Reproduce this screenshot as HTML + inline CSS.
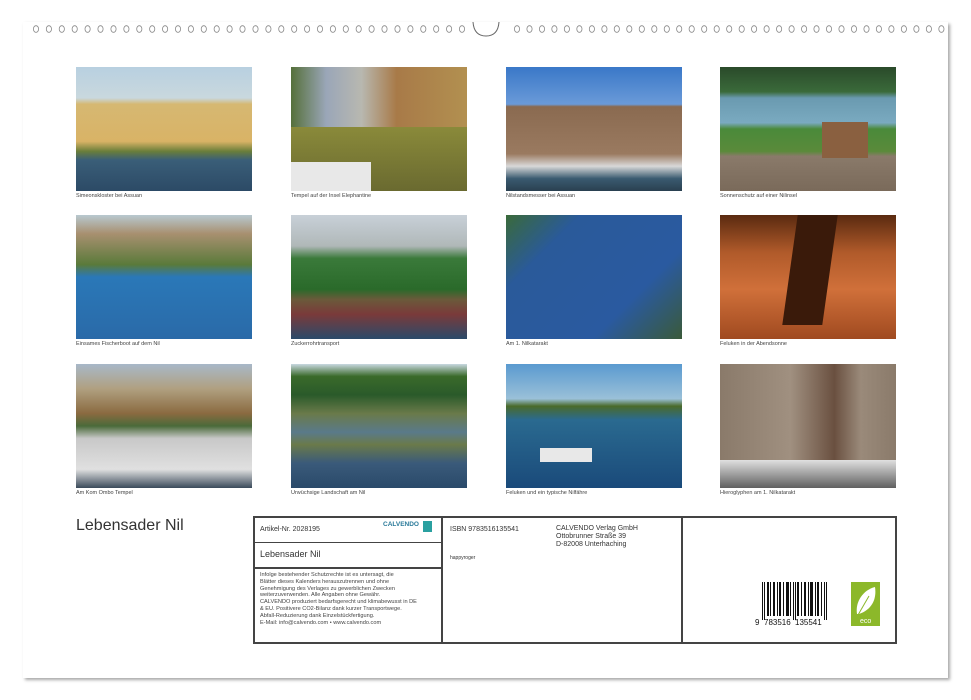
<!DOCTYPE html>
<html><head><meta charset="utf-8"><style>
*{margin:0;padding:0;box-sizing:border-box}
body{width:971px;height:700px;background:#fff;position:relative;overflow:hidden;font-family:"Liberation Sans",sans-serif;color:#333}
.page{position:absolute;left:23px;top:22px;width:925px;height:656px;background:#fff;box-shadow:2px 2px 3px rgba(0,0,0,.35)}
.ph{position:absolute;width:176px;height:124px;overflow:hidden}
.cap{position:absolute;font-size:5.5px;color:#444;white-space:nowrap}
.box{position:absolute;border:2px solid #444}
.t{position:absolute;white-space:nowrap}
</style></head><body>
<div class="page"></div>
<svg style="position:absolute;left:0;top:20px" width="971" height="20" id="holes">
<g fill="none" stroke="#888" stroke-width="0.8">
<ellipse cx="36" cy="9" rx="2.6" ry="3.3"/><ellipse cx="48.9" cy="9" rx="2.6" ry="3.3"/><ellipse cx="61.8" cy="9" rx="2.6" ry="3.3"/><ellipse cx="74.7" cy="9" rx="2.6" ry="3.3"/><ellipse cx="87.6" cy="9" rx="2.6" ry="3.3"/><ellipse cx="100.5" cy="9" rx="2.6" ry="3.3"/><ellipse cx="113.5" cy="9" rx="2.6" ry="3.3"/><ellipse cx="126.4" cy="9" rx="2.6" ry="3.3"/><ellipse cx="139.3" cy="9" rx="2.6" ry="3.3"/><ellipse cx="152.2" cy="9" rx="2.6" ry="3.3"/><ellipse cx="165.1" cy="9" rx="2.6" ry="3.3"/><ellipse cx="178" cy="9" rx="2.6" ry="3.3"/><ellipse cx="190.9" cy="9" rx="2.6" ry="3.3"/><ellipse cx="203.8" cy="9" rx="2.6" ry="3.3"/><ellipse cx="216.7" cy="9" rx="2.6" ry="3.3"/><ellipse cx="229.6" cy="9" rx="2.6" ry="3.3"/><ellipse cx="242.5" cy="9" rx="2.6" ry="3.3"/><ellipse cx="255.5" cy="9" rx="2.6" ry="3.3"/><ellipse cx="268.4" cy="9" rx="2.6" ry="3.3"/><ellipse cx="281.3" cy="9" rx="2.6" ry="3.3"/><ellipse cx="294.2" cy="9" rx="2.6" ry="3.3"/><ellipse cx="307.1" cy="9" rx="2.6" ry="3.3"/><ellipse cx="320" cy="9" rx="2.6" ry="3.3"/><ellipse cx="332.9" cy="9" rx="2.6" ry="3.3"/><ellipse cx="345.8" cy="9" rx="2.6" ry="3.3"/><ellipse cx="358.7" cy="9" rx="2.6" ry="3.3"/><ellipse cx="371.6" cy="9" rx="2.6" ry="3.3"/><ellipse cx="384.5" cy="9" rx="2.6" ry="3.3"/><ellipse cx="397.5" cy="9" rx="2.6" ry="3.3"/><ellipse cx="410.4" cy="9" rx="2.6" ry="3.3"/><ellipse cx="423.3" cy="9" rx="2.6" ry="3.3"/><ellipse cx="436.2" cy="9" rx="2.6" ry="3.3"/><ellipse cx="449.1" cy="9" rx="2.6" ry="3.3"/><ellipse cx="462" cy="9" rx="2.6" ry="3.3"/>
<ellipse cx="517" cy="9" rx="2.6" ry="3.3"/><ellipse cx="529.5" cy="9" rx="2.6" ry="3.3"/><ellipse cx="542" cy="9" rx="2.6" ry="3.3"/><ellipse cx="554.4" cy="9" rx="2.6" ry="3.3"/><ellipse cx="566.9" cy="9" rx="2.6" ry="3.3"/><ellipse cx="579.4" cy="9" rx="2.6" ry="3.3"/><ellipse cx="591.9" cy="9" rx="2.6" ry="3.3"/><ellipse cx="604.4" cy="9" rx="2.6" ry="3.3"/><ellipse cx="616.8" cy="9" rx="2.6" ry="3.3"/><ellipse cx="629.3" cy="9" rx="2.6" ry="3.3"/><ellipse cx="641.8" cy="9" rx="2.6" ry="3.3"/><ellipse cx="654.3" cy="9" rx="2.6" ry="3.3"/><ellipse cx="666.8" cy="9" rx="2.6" ry="3.3"/><ellipse cx="679.2" cy="9" rx="2.6" ry="3.3"/><ellipse cx="691.7" cy="9" rx="2.6" ry="3.3"/><ellipse cx="704.2" cy="9" rx="2.6" ry="3.3"/><ellipse cx="716.7" cy="9" rx="2.6" ry="3.3"/><ellipse cx="729.2" cy="9" rx="2.6" ry="3.3"/><ellipse cx="741.7" cy="9" rx="2.6" ry="3.3"/><ellipse cx="754.1" cy="9" rx="2.6" ry="3.3"/><ellipse cx="766.6" cy="9" rx="2.6" ry="3.3"/><ellipse cx="779.1" cy="9" rx="2.6" ry="3.3"/><ellipse cx="791.6" cy="9" rx="2.6" ry="3.3"/><ellipse cx="804.1" cy="9" rx="2.6" ry="3.3"/><ellipse cx="816.5" cy="9" rx="2.6" ry="3.3"/><ellipse cx="829" cy="9" rx="2.6" ry="3.3"/><ellipse cx="841.5" cy="9" rx="2.6" ry="3.3"/><ellipse cx="854" cy="9" rx="2.6" ry="3.3"/><ellipse cx="866.5" cy="9" rx="2.6" ry="3.3"/><ellipse cx="878.9" cy="9" rx="2.6" ry="3.3"/><ellipse cx="891.4" cy="9" rx="2.6" ry="3.3"/><ellipse cx="903.9" cy="9" rx="2.6" ry="3.3"/><ellipse cx="916.4" cy="9" rx="2.6" ry="3.3"/><ellipse cx="928.9" cy="9" rx="2.6" ry="3.3"/><ellipse cx="941.4" cy="9" rx="2.6" ry="3.3"/>
<path d="M473 2 Q474 16 486 16 Q498 16 499 2" stroke="#666" stroke-width="1"/>
</g>
</svg>

<!-- row 1 -->
<div class="ph" style="left:76px;top:67px;background:linear-gradient(#b8d0e0 0%,#c9d8de 25%,#d6b872 30%,#d9b366 60%,#6a7e3a 68%,#3a5e78 75%,#2c4a66 100%)"></div>
<div class="ph" style="left:291px;top:67px;background:linear-gradient(90deg,#55703a 0%,#9aa6b8 20%,#b8b8b0 40%,#a87a48 60%,#b29050 100%)"><div style="position:absolute;left:0;top:60px;width:176px;height:64px;background:linear-gradient(#8a8a3a,#6a6a30)"></div><div style="position:absolute;left:0;top:95px;width:80px;height:29px;background:#e8e8e8"></div></div>
<div class="ph" style="left:506px;top:67px;background:linear-gradient(#3a78c8 0%,#6a9ad8 30%,#8a6a50 32%,#9a7a60 70%,#d8d8d8 80%,#3a5a70 90%,#2a4050 100%)"></div>
<div class="ph" style="left:720px;top:67px;background:linear-gradient(#2a4a2a 0%,#3a6a3a 20%,#6a9ab0 25%,#7aaac0 45%,#4a8a3a 50%,#5a8a3a 68%,#8a7a6a 72%,#7a6a5a 100%)"><div style="position:absolute;left:102px;top:55px;width:46px;height:36px;background:#8a6040"></div></div>
<div class="cap" style="left:76px;top:193px">Simeonskloster bei Assuan</div>
<div class="cap" style="left:291px;top:193px">Tempel auf der Insel Elephantine</div>
<div class="cap" style="left:506px;top:193px">Nilstandsmesser bei Assuan</div>
<div class="cap" style="left:720px;top:193px">Sonnenschutz auf einer Nilinsel</div>

<!-- row 2 -->
<div class="ph" style="left:76px;top:215px;background:linear-gradient(#b8c8d0 0%,#a89070 15%,#5a7a3a 40%,#2a78b8 50%,#2a6aa8 100%)"></div>
<div class="ph" style="left:291px;top:215px;background:linear-gradient(#c8d0d8 0%,#b0b8b8 25%,#3a7a3a 35%,#2a6a2a 60%,#6a5a3a 68%,#7a3a3a 80%,#2a4a6a 100%)"></div>
<div class="ph" style="left:506px;top:215px;background:linear-gradient(135deg,#3a6a3a 0%,#2a5a9a 25%,#2a5aa0 70%,#3a5a3a 100%)"></div>
<div class="ph" style="left:720px;top:215px;background:linear-gradient(#5a2a10 0%,#b05a2a 30%,#d0703a 60%,#a04a20 100%)"><div style="position:absolute;left:70px;top:0;width:40px;height:110px;background:#3a1a0a;transform:skewX(-8deg)"></div></div>
<div class="cap" style="left:76px;top:341px">Einsames Fischerboot auf dem Nil</div>
<div class="cap" style="left:291px;top:341px">Zuckerrohrtransport</div>
<div class="cap" style="left:506px;top:341px">Am 1. Nilkatarakt</div>
<div class="cap" style="left:720px;top:341px">Feluken in der Abendsonne</div>

<!-- row 3 -->
<div class="ph" style="left:76px;top:364px;background:linear-gradient(#a8b8c8 0%,#b0a080 20%,#8a6a40 40%,#4a6a3a 50%,#c8c8c8 60%,#e0e0e0 85%,#3a4a5a 100%)"></div>
<div class="ph" style="left:291px;top:364px;background:linear-gradient(#c8d8e0 0%,#3a6a2a 10%,#2a5a2a 25%,#6a7a4a 40%,#5a7a8a 55%,#6a7a4a 65%,#3a5a7a 80%,#2a4a6a 100%)"></div>
<div class="ph" style="left:506px;top:364px;background:linear-gradient(#5a9ad0 0%,#9ac0d8 28%,#4a6a2a 34%,#2a6a90 45%,#1a4a7a 100%)"><div style="position:absolute;left:34px;top:84px;width:52px;height:14px;background:#e8e8e8"></div></div>
<div class="ph" style="left:720px;top:364px;background:linear-gradient(90deg,#8a7a6a 0%,#a09080 40%,#6a5040 65%,#9a8a7a 80%,#8a7a6a 100%)"><div style="position:absolute;left:0;top:96px;width:176px;height:28px;background:linear-gradient(#e0e0e0,#606060)"></div></div>
<div class="cap" style="left:76px;top:490px">Am Kom Ombo Tempel</div>
<div class="cap" style="left:291px;top:490px">Urwüchsige Landschaft am Nil</div>
<div class="cap" style="left:506px;top:490px">Feluken und ein typische Nilfähre</div>
<div class="cap" style="left:720px;top:490px">Hieroglyphen am 1. Nilkatarakt</div>

<div class="t" style="left:76px;top:517px;font-size:16px;color:#333">Lebensader Nil</div>

<!-- info box -->
<div class="box" style="left:253px;top:516px;width:644px;height:128px"></div>
<div style="position:absolute;left:441px;top:516px;width:2px;height:128px;background:#444"></div>
<div style="position:absolute;left:681px;top:516px;width:2px;height:128px;background:#444"></div>
<div style="position:absolute;left:253px;top:542px;width:189px;height:1px;background:#444"></div>
<div style="position:absolute;left:253px;top:567px;width:189px;height:2px;background:#444"></div>
<div class="t" style="left:260px;top:526px;font-size:7px">Artikel-Nr. 2028195</div>
<div class="t" style="left:383px;top:521px;font-size:6.5px;color:#2a7a9a;font-weight:bold">CALVENDO</div>
<div style="position:absolute;left:423px;top:521px;width:9px;height:11px;background:#2aa0a0"></div>
<div class="t" style="left:260px;top:549px;font-size:9px">Lebensader Nil</div>
<div class="t" style="left:260px;top:572px;font-size:5.6px;line-height:6.8px;color:#444">Infolge bestehender Schutzrechte ist es untersagt, die<br>Blätter dieses Kalenders herauszutrennen und ohne<br>Genehmigung des Verlages zu gewerblichen Zwecken<br>weiterzuverwenden. Alle Angaben ohne Gewähr.<br>CALVENDO produziert bedarfsgerecht und klimabewusst in DE<br>&amp; EU. Positivere CO2-Bilanz dank kurzer Transportwege.<br>Abfall-Reduzierung dank Einzelstückfertigung.<br>E-Mail: info@calvendo.com • www.calvendo.com</div>
<div class="t" style="left:450px;top:526px;font-size:7px">ISBN 9783516135541</div>
<div class="t" style="left:556px;top:525px;font-size:7px;line-height:8px">CALVENDO Verlag GmbH<br>Ottobrunner Straße 39<br>D-82008 Unterhaching</div>
<div class="t" style="left:450px;top:555px;font-size:5px">happyroger</div>

<svg style="position:absolute;left:755px;top:580px" width="80" height="48">
<g fill="#111">
<rect x="7" y="2" width="1" height="38"/><rect x="9" y="2" width="1" height="38"/><rect x="12" y="2" width="2" height="34"/><rect x="15" y="2" width="1" height="34"/><rect x="18" y="2" width="2" height="34"/><rect x="22" y="2" width="1" height="34"/><rect x="24" y="2" width="2" height="34"/><rect x="28" y="2" width="1" height="34"/><rect x="31" y="2" width="3" height="34"/><rect x="35" y="2" width="1" height="34"/><rect x="38" y="2" width="1" height="38"/><rect x="40" y="2" width="1" height="38"/><rect x="42" y="2" width="2" height="34"/><rect x="46" y="2" width="1" height="34"/><rect x="49" y="2" width="2" height="34"/><rect x="53" y="2" width="1" height="34"/><rect x="55" y="2" width="3" height="34"/><rect x="60" y="2" width="1" height="34"/><rect x="62" y="2" width="2" height="34"/><rect x="66" y="2" width="1" height="34"/><rect x="69" y="2" width="1" height="38"/><rect x="71" y="2" width="1" height="38"/>
</g>
<text x="0" y="45" font-size="8" font-family="Liberation Sans" fill="#111">9</text>
<text x="9" y="45" font-size="8" font-family="Liberation Sans" fill="#111">783516</text>
<text x="40" y="45" font-size="8" font-family="Liberation Sans" fill="#111">135541</text>
</svg>
<svg style="position:absolute;left:851px;top:582px" width="29" height="44">
<rect width="29" height="44" fill="#8cb82a"/>
<path d="M6 32 C4 20 12 8 24 5 C26 18 20 28 8 32 Z" fill="#fff"/>
<path d="M7 33 L18 14" stroke="#8cb82a" stroke-width="1"/>
<text x="9" y="41" font-size="7" font-family="Liberation Sans" fill="#fff">eco</text>
</svg>
</body></html>
